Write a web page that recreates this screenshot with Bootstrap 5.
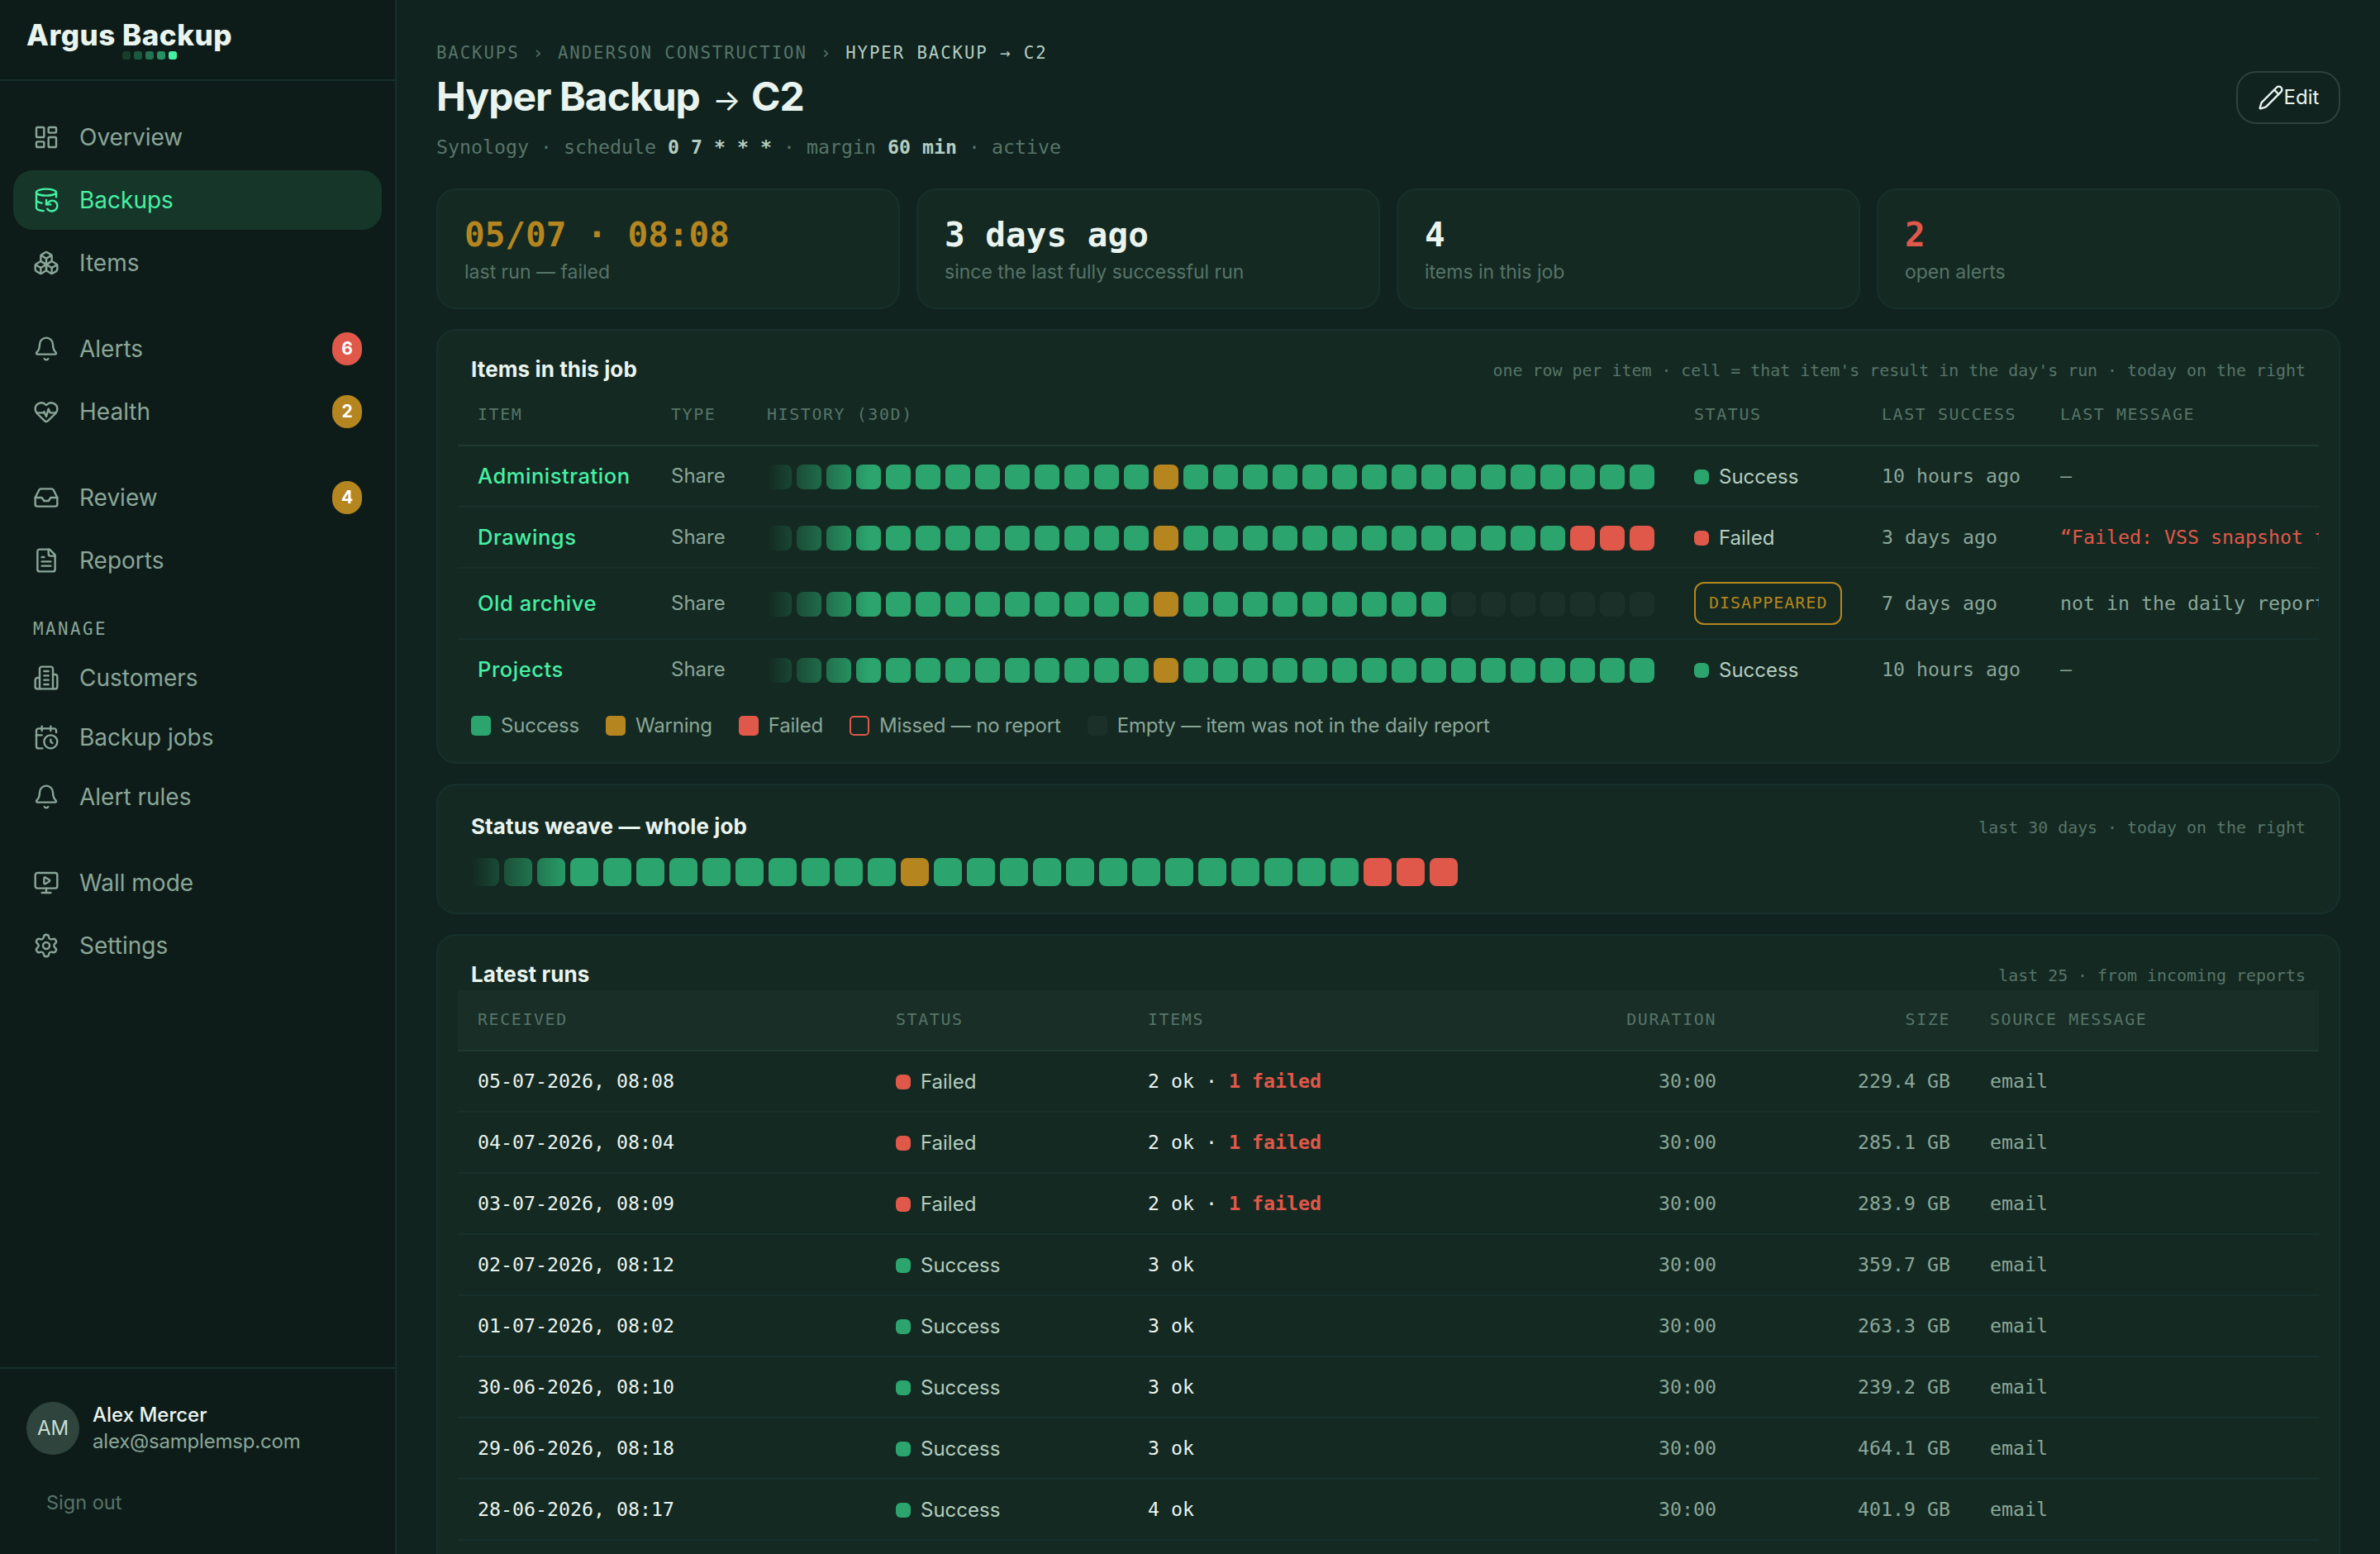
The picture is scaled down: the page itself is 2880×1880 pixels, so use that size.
<!DOCTYPE html>
<html lang="en">

<head>
    <meta charset="UTF-8">
    <meta name="viewport" content="width=device-width, initial-scale=1.0">
    <title>Argus Backup</title>
    <link href="https://cdn.jsdelivr.net/npm/bootstrap@5.3.3/dist/css/bootstrap.min.css" rel="stylesheet">
    <script src="https://cdn.jsdelivr.net/npm/bootstrap@5.3.3/dist/js/bootstrap.bundle.min.js"></script>
    <style>
        :root {
            --side: #0e1c19;
            --page: #10231f;
            --panel: #142922;
            --line: #17302b;
            --line-strong: #1d3a31;
            --text: #e9f4ee;
            --soft: #b4cdc0;
            --muted: #8aa698;
            --dim: #577468;
            --accent: #46f0a4;
            --ok: #2ba56d;
            --warn: #b5861f;
            --fail: #e05849;
            --none: #1c302a;
        }

        body {
            height: 1880px;
            overflow: hidden;
            background: var(--page);
            color: var(--text);
            font-family: Inter, "Liberation Sans", sans-serif;
            font-size: 24px;
            line-height: 32px;
        }

        .mono {
            font-family: "DejaVu Sans Mono", monospace;
            font-size: 23.25px;
        }

        /* Sidebar */
        .sidebar {
            width: 480px;
            height: 1880px;
            background: var(--side);
            border-right: 2px solid var(--line);
        }

        .brand {
            height: 98px;
            padding: 22px 0 0 32px;
            border-bottom: 2px solid var(--line);
        }

        .brand-name {
            font-size: 35px;
            font-weight: 800;
            line-height: 40px;
            letter-spacing: .5px;
        }

        .brand-dots {
            gap: 4px;
            padding-left: 116px;
        }

        .brand-dots i {
            width: 10px;
            height: 10px;
            border-radius: 3px;
            background: var(--ok);
        }

        .brand-dots i:nth-child(1) {
            opacity: .25;
        }

        .brand-dots i:nth-child(2) {
            opacity: .45;
        }

        .brand-dots i:nth-child(3) {
            opacity: .65;
        }

        .brand-dots i:nth-child(4) {
            opacity: .85;
        }

        .brand-dots i:nth-child(5) {
            background: var(--accent);
        }

        .side-nav {
            padding: 32px 16px 0;
        }

        .side-group {
            gap: 4px;
            margin-bottom: 32px;
        }

        .side-link {
            height: 72px;
            gap: 24px;
            padding: 0 24px;
            border-radius: 24px;
            color: var(--muted);
            font-size: 28px;
            text-decoration: none;
        }

        .side-link.active {
            background: #16362a;
            color: var(--accent);
        }

        .side-link svg,
        .btn-edit svg {
            width: 32px;
            height: 32px;
            flex: none;
            fill: none;
            stroke: currentColor;
            stroke-width: 1.8;
            stroke-linecap: round;
            stroke-linejoin: round;
        }

        .count {
            width: 36px;
            height: 40px;
            border-radius: 18px;
            color: #fff;
            font-size: 21px;
            font-weight: 700;
            line-height: 40px;
        }

        .side-label {
            height: 38px;
            padding-left: 24px;
            font-size: 20.8px;
            letter-spacing: 2.5px;
            line-height: 30px;
            color: var(--muted);
        }

        .account {
            height: 226px;
            padding: 40px 32px 0;
            border-top: 2px solid var(--line);
        }

        .avatar {
            width: 64px;
            height: 64px;
            background: #2e443d;
            color: #c9ddd2;
        }

        .email {
            letter-spacing: -.2px;
            color: var(--muted);
        }

        .sign-out {
            padding: 42px 0 0 24px;
            font-size: 23.5px;
            color: var(--dim);
        }

        /* Page header */
        .content {
            min-width: 0;
            padding: 48px 48px 0;
        }

        .crumbs {
            gap: 16px;
            font-size: 20.7px;
            letter-spacing: 1.92px;
            color: var(--dim);
        }

        .page-title {
            padding-top: 7px;
            font-size: 48px;
            font-weight: 700;
            line-height: 60px;
            letter-spacing: -1px;
        }

        .page-title span {
            padding: 0 3px 0 5px;
            font-size: 36px;
            font-weight: 400;
            line-height: 1;
        }

        .page-sub {
            padding-top: 21px;
            line-height: 20px;
            color: var(--dim);
        }

        .btn-edit {
            width: 126px;
            height: 64px;
            padding: 0;
            border: 2px solid #2c423b;
            border-radius: 24px;
            color: var(--text);
            font-size: 24px;
        }

        /* Stat tiles and panels */
        .stats {
            display: grid;
            grid-template-columns: repeat(4, 1fr);
            gap: 20px;
            margin: 40px 0 24px;
        }

        .stat,
        .panel {
            background: var(--panel);
            border: 2px solid var(--line);
            border-radius: 24px;
        }

        .stat {
            height: 146px;
            padding: 26px 32px 0;
            font-size: 23px;
            color: var(--dim);
        }

        .stat b {
            display: block;
            font-size: 41px;
            line-height: 57px;
            color: var(--text);
        }

        .panel {
            padding: 24px 24px 0;
            margin-bottom: 24px;
        }

        .panel-head {
            height: 42px;
            padding: 5px 16px 0;
        }

        .panel-head h2 {
            margin: 0;
            font-size: 26px;
            font-weight: 700;
            line-height: 36px;
            letter-spacing: .1px;
        }

        .panel-head span {
            font-size: 19.93px;
            line-height: 39px;
            color: var(--dim);
        }

        .data {
            table-layout: fixed;
            border-collapse: separate;
            border-spacing: 0;
        }

        .data th,
        .data td {
            height: 74px;
            padding: 0 24px;
            border-bottom: 2px solid var(--line);
            white-space: nowrap;
            vertical-align: middle;
        }

        .data th {
            border-bottom-color: var(--line-strong);
            font-family: "DejaVu Sans Mono", monospace;
            font-size: 19.93px;
            font-weight: 400;
            letter-spacing: 1.6px;
            color: var(--dim);
        }

        .data td {
            color: var(--muted);
        }

        .items-table {
            width: 2452px;
        }

        .items-table tr:last-child td {
            height: 72px;
            border-bottom: 0;
        }

        .items-table tr.tall td {
            height: 86px;
        }

        .items-table .weave {
            margin-top: 2px;
        }

        .runs-table thead {
            background: #182e27;
        }

        .items-table .item-name {
            color: var(--accent);
            font-size: 25.5px;
            font-weight: 500;
            letter-spacing: .55px;
        }

        .state {
            gap: 12px;
            padding-top: 2px;
            color: var(--soft);
        }

        .state::before {
            content: "";
            width: 18px;
            height: 18px;
            border-radius: 6px;
            background: var(--dot);
        }

        .is-ok {
            --dot: var(--ok);
        }

        .is-fail {
            --dot: var(--fail);
        }

        .gone {
            height: 52px;
            padding: 0 16px;
            border: 2px solid var(--warn);
            border-radius: 12px;
            font-size: 20px;
            letter-spacing: 1px;
            line-height: 46px;
            color: var(--warn);
        }

        /* Day cells, oldest ones fade out on the left */
        .weave {
            --cell: 30px;
            gap: 6px;
            -webkit-mask-image: linear-gradient(90deg, transparent, #000 124px);
            mask-image: linear-gradient(90deg, transparent, #000 124px);
        }

        .weave i {
            width: var(--cell);
            height: var(--cell);
            flex: none;
            border-radius: 8px;
            background: var(--ok);
        }

        .weave .w {
            background: var(--warn);
        }

        .weave .f {
            background: var(--fail);
        }

        .weave .e {
            background: var(--none);
        }

        .weave-lg {
            --cell: 34px;
        }

        .weave-wrap {
            padding: 22px 16px 32px;
        }

        .legend {
            gap: 32px;
            height: 76px;
            padding: 20px 16px 0;
            letter-spacing: -.2px;
            line-height: 24px;
            color: var(--muted);
        }

        .legend span {
            gap: 12px;
            height: 24px;
        }

        .legend i {
            width: 24px;
            height: 24px;
            border-radius: 5px;
        }

        .c-soft {
            color: var(--soft);
        }

        .data .c-text {
            color: var(--text);
        }

        .stat .c-warn {
            color: var(--warn);
        }

        .stat .c-fail,
        .data .c-fail {
            color: var(--fail);
        }

        .bg-ok {
            background: var(--ok);
        }

        .bg-warn {
            background: var(--warn);
        }

        .bg-fail {
            background: var(--fail);
        }

        .bg-none {
            background: var(--none);
        }

        .missed {
            border: 2px solid var(--fail);
        }
    </style>
</head>

<body class="d-flex">
    <aside class="sidebar d-flex flex-column flex-shrink-0">
        <div class="brand">
            <div class="brand-name">Argus Backup</div>
            <div class="brand-dots d-flex"><i></i><i></i><i></i><i></i><i></i></div>
        </div>

        <nav class="side-nav flex-grow-1">
            <div class="side-group d-flex flex-column">
                <a class="side-link d-flex align-items-center" href="#">
                    <svg viewBox="0 0 24 24"><rect width="7" height="9" x="3" y="3" rx="1" /><rect width="7" height="5" x="14" y="3" rx="1" /><rect width="7" height="9" x="14" y="12" rx="1" /><rect width="7" height="5" x="3" y="16" rx="1" /></svg>
                    Overview
                </a>
                <a class="side-link active d-flex align-items-center" href="#">
                    <svg viewBox="0 0 24 24"><ellipse cx="12" cy="5" rx="9" ry="3" /><path d="M3 12a9 3 0 0 0 5 2.69" /><path d="M21 9.3V5" /><path d="M3 5v14a9 3 0 0 0 6.47 2.88" /><path d="M12 12v4h4" /><path d="M13 20a5 5 0 0 0 9-3 4.5 4.5 0 0 0-4.5-4.5c-1.33 0-2.54.54-3.41 1.41L12 16" /></svg>
                    Backups
                </a>
                <a class="side-link d-flex align-items-center" href="#">
                    <svg viewBox="0 0 24 24"><path d="M2.97 12.92A2 2 0 0 0 2 14.63v3.24a2 2 0 0 0 .97 1.71l3 1.8a2 2 0 0 0 2.06 0L12 19v-5.5l-5-3-4.03 2.42Z" /><path d="m7 16.5-4.74-2.85" /><path d="m7 16.5 5-3" /><path d="M7 16.5v5.17" /><path d="M12 13.5V19l3.97 2.38a2 2 0 0 0 2.06 0l3-1.8a2 2 0 0 0 .97-1.71v-3.24a2 2 0 0 0-.97-1.71L17 10.5l-5 3Z" /><path d="m17 16.5-5-3" /><path d="m17 16.5 4.74-2.85" /><path d="M17 16.5v5.17" /><path d="M7.97 4.42A2 2 0 0 0 7 6.13v4.37l5 3 5-3V6.13a2 2 0 0 0-.97-1.71l-3-1.8a2 2 0 0 0-2.06 0l-3 1.8Z" /><path d="M12 8 7.26 5.15" /><path d="m12 8 4.74-2.85" /><path d="M12 13.5V8" /></svg>
                    Items
                </a>
            </div>

            <div class="side-group d-flex flex-column">
                <a class="side-link d-flex align-items-center" href="#">
                    <svg viewBox="0 0 24 24"><path d="M10.268 21a2 2 0 0 0 3.464 0" /><path d="M3.262 15.326A1 1 0 0 0 4 17h16a1 1 0 0 0 .74-1.673C19.41 13.956 18 12.499 18 8A6 6 0 0 0 6 8c0 4.499-1.411 5.956-2.738 7.326" /></svg>
                    Alerts
                    <span class="count bg-fail text-center ms-auto">6</span>
                </a>
                <a class="side-link d-flex align-items-center" href="#">
                    <svg viewBox="0 0 24 24"><path d="M2 9.5a5.5 5.5 0 0 1 9.591-3.676.56.56 0 0 0 .818 0A5.49 5.49 0 0 1 22 9.5c0 2.29-1.5 4-3 5.5l-5.492 5.313a2 2 0 0 1-3 .019L5 15c-1.5-1.5-3-3.2-3-5.5" /><path d="M3.22 13H9.5l.5-1 2 4.5 2-7 1.5 3.5h5.27" /></svg>
                    Health
                    <span class="count bg-warn text-center ms-auto">2</span>
                </a>
            </div>

            <div class="side-group d-flex flex-column mb-4">
                <a class="side-link d-flex align-items-center" href="#">
                    <svg viewBox="0 0 24 24"><path d="M22 12h-6l-2 3h-4l-2-3H2" /><path d="M5.45 5.11 2 12v6a2 2 0 0 0 2 2h16a2 2 0 0 0 2-2v-6l-3.45-6.89A2 2 0 0 0 16.76 4H7.24a2 2 0 0 0-1.79 1.11z" /></svg>
                    Review
                    <span class="count bg-warn text-center ms-auto">4</span>
                </a>
                <a class="side-link d-flex align-items-center" href="#">
                    <svg viewBox="0 0 24 24"><path d="M15 2H6a2 2 0 0 0-2 2v16a2 2 0 0 0 2 2h12a2 2 0 0 0 2-2V7Z" /><path d="M14 2v4a2 2 0 0 0 2 2h4" /><path d="M10 9H8" /><path d="M16 13H8" /><path d="M16 17H8" /></svg>
                    Reports
                </a>
            </div>

            <div class="side-label mono pt-2">MANAGE</div>
            <div class="side-group d-flex flex-column gap-0 pt-2">
                <a class="side-link d-flex align-items-center" href="#">
                    <svg viewBox="0 0 24 24"><path d="M6 22V4a2 2 0 0 1 2-2h8a2 2 0 0 1 2 2v18Z" /><path d="M6 12H4a2 2 0 0 0-2 2v6a2 2 0 0 0 2 2h2" /><path d="M18 9h2a2 2 0 0 1 2 2v9a2 2 0 0 1-2 2h-2" /><path d="M10 6h4" /><path d="M10 10h4" /><path d="M10 14h4" /><path d="M10 18h4" /></svg>
                    Customers
                </a>
                <a class="side-link d-flex align-items-center" href="#">
                    <svg viewBox="0 0 24 24"><path d="M16 14v2.2l1.6 1" /><path d="M16 2v4" /><path d="M21 7.5V6a2 2 0 0 0-2-2H5a2 2 0 0 0-2 2v14a2 2 0 0 0 2 2h3.5" /><path d="M3 10h5" /><path d="M8 2v4" /><circle cx="16" cy="16" r="6" /></svg>
                    Backup jobs
                </a>
                <a class="side-link d-flex align-items-center" href="#">
                    <svg viewBox="0 0 24 24"><path d="M10.268 21a2 2 0 0 0 3.464 0" /><path d="M3.262 15.326A1 1 0 0 0 4 17h16a1 1 0 0 0 .74-1.673C19.41 13.956 18 12.499 18 8A6 6 0 0 0 6 8c0 4.499-1.411 5.956-2.738 7.326" /></svg>
                    Alert rules
                </a>
            </div>

            <div class="side-group d-flex flex-column">
                <a class="side-link d-flex align-items-center" href="#">
                    <svg viewBox="0 0 24 24"><path d="M10 7.75a.75.75 0 0 1 1.142-.638l3.664 2.249a.75.75 0 0 1 0 1.278l-3.664 2.25a.75.75 0 0 1-1.142-.64z" /><path d="M12 17v4" /><path d="M8 21h8" /><rect x="2" y="3" width="20" height="14" rx="2" /></svg>
                    Wall mode
                </a>
                <a class="side-link d-flex align-items-center" href="#">
                    <svg viewBox="0 0 24 24"><path d="M9.671 4.136a2.34 2.34 0 0 1 4.659 0 2.34 2.34 0 0 0 3.319 1.915 2.34 2.34 0 0 1 2.33 4.033 2.34 2.34 0 0 0 0 3.831 2.34 2.34 0 0 1-2.33 4.033 2.34 2.34 0 0 0-3.319 1.915 2.34 2.34 0 0 1-4.659 0 2.34 2.34 0 0 0-3.32-1.915 2.34 2.34 0 0 1-2.33-4.033 2.34 2.34 0 0 0 0-3.831A2.34 2.34 0 0 1 6.35 6.051a2.34 2.34 0 0 0 3.319-1.915" /><circle cx="12" cy="12" r="3" /></svg>
                    Settings
                </a>
            </div>
        </nav>

        <div class="account">
            <div class="d-flex align-items-center">
                <div class="avatar rounded-circle d-flex align-items-center justify-content-center me-3">AM</div>
                <div>
                    <div class="fw-medium">Alex Mercer</div>
                    <div class="email">alex@samplemsp.com</div>
                </div>
            </div>
            <div class="sign-out">Sign out</div>
        </div>
    </aside>

    <main class="content flex-grow-1">
        <header class="d-flex align-items-center justify-content-between">
            <div>
                <div class="crumbs mono d-flex">
                    <span>BACKUPS</span><span>›</span><span>ANDERSON CONSTRUCTION</span><span>›</span><span class="c-soft">HYPER BACKUP → C2</span>
                </div>
                <h1 class="page-title m-0">Hyper Backup <span>→</span> C2</h1>
                <div class="page-sub mono">Synology · schedule <b class="c-soft">0 7 * * *</b> · margin <b class="c-soft">60 min</b> · active</div>
            </div>
            <button class="btn btn-edit d-flex align-items-center justify-content-center" type="button">
                <svg viewBox="0 0 24 24"><path d="M21.174 6.812a1 1 0 0 0-3.986-3.987L3.842 16.174a2 2 0 0 0-.5.83l-1.321 4.352a.5.5 0 0 0 .623.622l4.353-1.32a2 2 0 0 0 .83-.497z" /><path d="m15 5 4 4" /></svg>Edit
            </button>
        </header>

        <section class="stats">
            <div class="stat"><b class="mono c-warn">05/07 · 08:08</b>last run — failed</div>
            <div class="stat"><b class="mono">3 days ago</b>since the last fully successful run</div>
            <div class="stat"><b class="mono">4</b>items in this job</div>
            <div class="stat"><b class="mono c-fail">2</b>open alerts</div>
        </section>

        <section class="panel">
            <div class="panel-head d-flex justify-content-between">
                <h2>Items in this job</h2>
                <span class="mono">one row per item · cell = that item's result in the day's run · today on the right</span>
            </div>
            <div class="overflow-hidden">
                <table class="data items-table">
                    <colgroup>
                        <col style="width: 234px">
                        <col style="width: 116px">
                        <col style="width: 1122px">
                        <col style="width: 227px">
                        <col style="width: 216px">
                        <col>
                    </colgroup>
                    <thead>
                        <tr>
                            <th>ITEM</th>
                            <th>TYPE</th>
                            <th>HISTORY (30D)</th>
                            <th>STATUS</th>
                            <th>LAST SUCCESS</th>
                            <th>LAST MESSAGE</th>
                        </tr>
                    </thead>
                    <tbody>
                        <tr>
                            <td class="item-name">Administration</td>
                            <td>Share</td>
                            <td><div class="weave d-flex" data-days="ssssssssssssswssssssssssssssss"></div></td>
                            <td><div class="state is-ok d-flex align-items-center">Success</div></td>
                            <td class="mono">10 hours ago</td>
                            <td class="mono">—</td>
                        </tr>
                        <tr>
                            <td class="item-name">Drawings</td>
                            <td>Share</td>
                            <td><div class="weave d-flex" data-days="ssssssssssssswsssssssssssssfff"></div></td>
                            <td><div class="state is-fail d-flex align-items-center">Failed</div></td>
                            <td class="mono">3 days ago</td>
                            <td class="mono c-fail">“Failed: VSS snapshot timeout”</td>
                        </tr>
                        <tr class="tall">
                            <td class="item-name">Old archive</td>
                            <td>Share</td>
                            <td><div class="weave d-flex" data-days="ssssssssssssswssssssssseeeeeee"></div></td>
                            <td><div class="gone mono d-inline-block align-middle">DISAPPEARED</div></td>
                            <td class="mono">7 days ago</td>
                            <td class="mono">not in the daily report</td>
                        </tr>
                        <tr>
                            <td class="item-name">Projects</td>
                            <td>Share</td>
                            <td><div class="weave d-flex" data-days="ssssssssssssswssssssssssssssss"></div></td>
                            <td><div class="state is-ok d-flex align-items-center">Success</div></td>
                            <td class="mono">10 hours ago</td>
                            <td class="mono">—</td>
                        </tr>
                    </tbody>
                </table>
            </div>
            <div class="legend d-flex">
                <span class="d-flex align-items-center"><i class="bg-ok"></i>Success</span>
                <span class="d-flex align-items-center"><i class="bg-warn"></i>Warning</span>
                <span class="d-flex align-items-center"><i class="bg-fail"></i>Failed</span>
                <span class="d-flex align-items-center"><i class="missed"></i>Missed — no report</span>
                <span class="d-flex align-items-center"><i class="bg-none"></i>Empty — item was not in the daily report</span>
            </div>
        </section>

        <section class="panel">
            <div class="panel-head d-flex justify-content-between pt-2">
                <h2>Status weave — whole job</h2>
                <span class="mono">last 30 days · today on the right</span>
            </div>
            <div class="weave-wrap">
                <div class="weave weave-lg d-flex" data-days="ssssssssssssswsssssssssssssfff"></div>
            </div>
        </section>

        <section class="panel">
            <div class="panel-head d-flex justify-content-between">
                <h2>Latest runs</h2>
                <span class="mono">last 25 · from incoming reports</span>
            </div>
            <table class="data runs-table w-100">
                <colgroup>
                    <col style="width: 506px">
                    <col style="width: 305px">
                    <col style="width: 440px">
                    <col style="width: 296px">
                    <col style="width: 283px">
                    <col>
                </colgroup>
                <thead>
                    <tr>
                        <th>RECEIVED</th>
                        <th>STATUS</th>
                        <th>ITEMS</th>
                        <th class="text-end">DURATION</th>
                        <th class="text-end">SIZE</th>
                        <th>SOURCE MESSAGE</th>
                    </tr>
                </thead>
                <tbody id="runs"></tbody>
            </table>
        </section>
    </main>

    <script>
        // s = success, w = warning, f = failed, e = empty
        document.querySelectorAll(".weave").forEach(weave => {
            for (const day of weave.dataset.days) {
                const cell = document.createElement("i");
                cell.className = day;
                weave.appendChild(cell);
            }
        });

        const runs = [
            { received: "05-07-2026, 08:08", ok: 2, failed: 1, size: "229.4 GB" },
            { received: "04-07-2026, 08:04", ok: 2, failed: 1, size: "285.1 GB" },
            { received: "03-07-2026, 08:09", ok: 2, failed: 1, size: "283.9 GB" },
            { received: "02-07-2026, 08:12", ok: 3, failed: 0, size: "359.7 GB" },
            { received: "01-07-2026, 08:02", ok: 3, failed: 0, size: "263.3 GB" },
            { received: "30-06-2026, 08:10", ok: 3, failed: 0, size: "239.2 GB" },
            { received: "29-06-2026, 08:18", ok: 3, failed: 0, size: "464.1 GB" },
            { received: "28-06-2026, 08:17", ok: 4, failed: 0, size: "401.9 GB" }
        ];

        document.getElementById("runs").innerHTML = runs.map(run => `
            <tr>
                <td class="mono c-text">${run.received}</td>
                <td><div class="state ${run.failed ? "is-fail" : "is-ok"} d-flex align-items-center">${run.failed ? "Failed" : "Success"}</div></td>
                <td class="mono c-text">${run.ok} ok${run.failed ? ` · <b class="c-fail">${run.failed} failed</b>` : ""}</td>
                <td class="mono text-end">30:00</td>
                <td class="mono text-end">${run.size}</td>
                <td class="mono">email</td>
            </tr>`).join("") + "<tr><td colspan=\"6\"></td></tr>";
    </script>
</body>

</html>
